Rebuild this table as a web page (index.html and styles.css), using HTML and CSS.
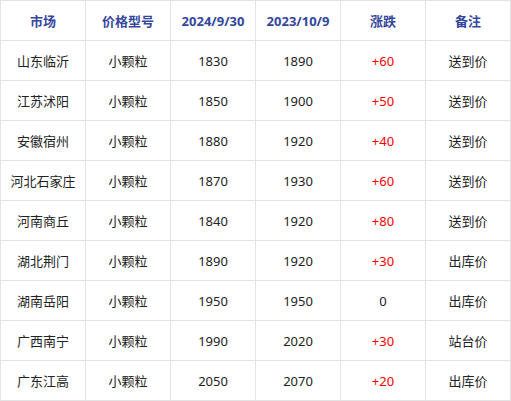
FILE: index.html
```html
<!DOCTYPE html>
<html>
<head>
<meta charset="utf-8">
<link rel="stylesheet" href="styles.css">
</head>
<body>
<table class="price-table">
<thead>
<tr><th>市场</th><th>价格型号</th><th>2024/9/30</th><th>2023/10/9</th><th>涨跌</th><th>备注</th></tr>
</thead>
<tbody>
<tr><td>山东临沂</td><td>小颗粒</td><td>1830</td><td>1890</td><td class="up">+60</td><td>送到价</td></tr>
<tr><td>江苏沭阳</td><td>小颗粒</td><td>1850</td><td>1900</td><td class="up">+50</td><td>送到价</td></tr>
<tr><td>安徽宿州</td><td>小颗粒</td><td>1880</td><td>1920</td><td class="up">+40</td><td>送到价</td></tr>
<tr><td>河北石家庄</td><td>小颗粒</td><td>1870</td><td>1930</td><td class="up">+60</td><td>送到价</td></tr>
<tr><td>河南商丘</td><td>小颗粒</td><td>1840</td><td>1920</td><td class="up">+80</td><td>送到价</td></tr>
<tr><td>湖北荆门</td><td>小颗粒</td><td>1890</td><td>1920</td><td class="up">+30</td><td>出库价</td></tr>
<tr><td>湖南岳阳</td><td>小颗粒</td><td>1950</td><td>1950</td><td>0</td><td>出库价</td></tr>
<tr><td>广西南宁</td><td>小颗粒</td><td>1990</td><td>2020</td><td class="up">+30</td><td>站台价</td></tr>
<tr><td>广东江高</td><td>小颗粒</td><td>2050</td><td>2070</td><td class="up">+20</td><td>出库价</td></tr>
</tbody>
</table>
</body>
</html>
```
FILE: styles.css
```css
html, body {
  margin: 0;
  padding: 0;
  background: #fff;
}
.price-table {
  border-collapse: collapse;
  table-layout: fixed;
  width: 511px;
  font-family: "Noto Sans", "Noto Sans CJK SC", sans-serif;
  font-size: 13px;
  color: #222;
}
.price-table th,
.price-table td {
  border: 1px solid #e3e3e3;
  height: 40px;
  padding: 0;
  text-align: center;
  vertical-align: middle;
  box-sizing: border-box;
}
.price-table th {
  color: #34479b;
  font-weight: bold;
}
.price-table td.up {
  color: #ff0000;
}
```
